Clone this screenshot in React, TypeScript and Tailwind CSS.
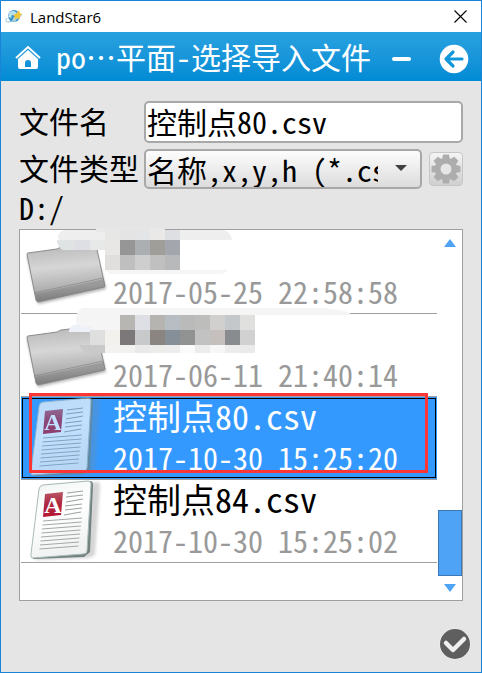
import { useId, useState } from 'react';

type Entry = { name: string; date: string; kind: 'folder' | 'doc' };

const entries: Entry[] = [
  { name: '', date: '2017-05-25 22:58:58', kind: 'folder' },
  { name: '', date: '2017-06-11 21:40:14', kind: 'folder' },
  { name: '控制点80.csv', date: '2017-10-30 15:25:20', kind: 'doc' },
  { name: '控制点84.csv', date: '2017-10-30 15:25:02', kind: 'doc' },
];

// Pixelated blocks that hide the two folder names: x, y, width, height, colour.
const blocks: [number, number, number, number, string][] = [
  [105, 229, 15, 11, '#e7e7e6'], [120, 229, 15, 11, '#e3e4e3'], [135, 229, 15, 11, '#e4e5e6'], [150, 229, 15, 11, '#ebe9e7'], [165, 230, 15, 10, '#dddfe2'],
  [105, 240, 15, 15, '#e8e7e5'], [120, 240, 15, 15, '#969696'], [135, 240, 15, 15, '#acafb2'], [150, 240, 15, 15, '#a09e99'], [165, 240, 15, 15, '#a3a7ad'],
  [105, 255, 15, 15, '#e0dfde'], [120, 255, 15, 15, '#bfbfbf'], [135, 255, 15, 15, '#cecece'], [150, 255, 15, 15, '#c0c0c0'], [165, 255, 15, 15, '#b7b9bb'],
  [105, 315, 15, 15, '#f5f5f5'], [120, 315, 15, 15, '#b8b6b2'], [135, 315, 15, 15, '#dddfe5'], [150, 315, 15, 15, '#b6b4b0'], [165, 315, 15, 15, '#b8bcc3'],
  [180, 315, 15, 15, '#bababa'], [195, 315, 15, 15, '#bdbdbb'], [210, 315, 15, 15, '#d2d0cf'], [225, 315, 15, 15, '#c4c8cb'], [240, 315, 15, 15, '#e0e0de'],
  [90, 330, 15, 15, '#dfdfdf'], [105, 330, 15, 15, '#f3f1ed'], [120, 330, 15, 15, '#7c787a'], [135, 330, 15, 15, '#c7c9cb'], [150, 330, 15, 15, '#8b8581'], [165, 330, 15, 15, '#868e98'],
  [180, 330, 15, 15, '#909391'], [195, 330, 15, 15, '#c2c2c2'], [210, 330, 15, 15, '#c5c0bd'], [225, 330, 15, 15, '#888c8f'], [240, 330, 15, 15, '#d1d1d1'],
  [105, 345, 15, 8, '#f3f2f1'], [120, 345, 15, 8, '#f2f2f0'], [135, 345, 15, 8, '#e9e9e9'], [150, 345, 15, 8, '#ececeb'], [165, 345, 15, 8, '#ededee'],
  [180, 345, 15, 8, '#fbfbfb'], [195, 345, 15, 8, '#ececec'], [210, 345, 15, 8, '#f7f7f7'], [225, 345, 15, 8, '#ececec'], [240, 345, 15, 8, '#eaeaea'],
];

function NameMosaic() {
  return (
    <svg className="pointer-events-none absolute -top-[5px] left-[30px]" width="310" height="130" viewBox="50 225 310 130" aria-hidden="true">
      <path d="M64 230h160c5 2 7 5 8 10H60c-4-2-2-8 4-10z" fill="#eeeeee" />
      <path d="M96 228h67v4h-67z" fill="#e8e8e8" />
      <path d="M57 240h18v10H63c-4-2-6-6-6-10z" fill="#e0e3e3" />
      <path d="M75 240h15v10H75z" fill="#dddfe5" />
      <path d="M90 240h15v10H90z" fill="#e7e8e8" />
      <path d="M105 270h123c-2 3-6 4-9 4H110z" fill="#f5f5f5" />
      <path d="M82 308h243l20 3 8 4H120v15H79c-5-8-4-17 3-22z" fill="#f5f5f5" />
      <path d="M69 330c2-6 8-8 14-2 4-3 8-3 12 2l-4 2H69z" fill="#eff1f8" />
      <path d="M79 345h26v8H87q-6-3-8-8z" fill="#c9c9c9" />
      {blocks.map(([x, y, w, h, fill]) => (
        <rect key={`${x}-${y}`} x={x} y={y} width={w} height={h} fill={fill} />
      ))}
    </svg>
  );
}

function FolderIcon() {
  const id = useId();
  return (
    <svg className="shrink-0 overflow-visible" width="90" height="80" viewBox="0 0 90 80" aria-hidden="true">
      <defs>
        <linearGradient id={id + 'f'} x1="0" y1="0" x2="0.12" y2="1">
          <stop offset="0" stopColor="#b4b4b4" />
          <stop offset="0.45" stopColor="#d6d6d6" />
          <stop offset="0.8" stopColor="#b0b0b0" />
          <stop offset="1" stopColor="#808080" />
        </linearGradient>
        <filter id={id + 's'} x="-20%" y="-20%" width="140%" height="140%">
          <feGaussianBlur stdDeviation="1.5" />
        </filter>
      </defs>
      <path d="M4 24 72 16 83 57 15 72z" fill="#777" opacity="0.6" filter={`url(#${id}s)`} />
      <path d="M4 22q0-1 1-1L34 17l4-2 33-4q2 0 2 2l9 41q0 1-1 1L15 70q-1 0-2-2z" fill={`url(#${id}f)`} stroke="#8c8c8c" strokeWidth="1" />
      <path d="M12 62 81 47 82 55 14 70z" fill="#777" opacity="0.4" />
      <path d="m11 61 69-15" stroke="#858585" strokeWidth="1" opacity="0.7" />
    </svg>
  );
}

function DocIcon({ dim }: { dim: boolean }) {
  const id = useId();
  const lower = [0, 1, 2, 3, 4, 5, 6, 7];
  return (
    <svg className={`shrink-0 overflow-visible ${dim ? 'opacity-70' : ''}`} width="90" height="80" viewBox="0 0 90 80" aria-hidden="true">
      <defs>
        <linearGradient id={id + 'p'} x1="0" y1="0" x2="0.3" y2="1">
          <stop offset="0" stopColor="#f1f4f4" />
          <stop offset="0.5" stopColor="#ffffff" />
          <stop offset="1" stopColor="#f0f2f2" />
        </linearGradient>
        <linearGradient id={id + 'r'} x1="0" y1="0" x2="0" y2="1">
          <stop offset="0" stopColor="#b95564" />
          <stop offset="0.5" stopColor="#ae2540" />
          <stop offset="1" stopColor="#b51732" />
        </linearGradient>
        <filter id={id + 's'} x="-20%" y="-20%" width="140%" height="140%">
          <feGaussianBlur stdDeviation="1.5" />
        </filter>
      </defs>
      <path d="M22 5 74 1Q77 1 77 5L72 74 66 77 12 79z" fill="#888" opacity="0.35" filter={`url(#${id}s)`} />
      <path d="M19 5 67 0Q70 0 70 4L67 71 61 76 10 78z" fill="#71827f" />
      <path d="M20 4 65 0Q68 0 68 3L64 70Q64 73 60 73L10 77Q7 77 8 73L16 8Q17 4 20 4z" fill={`url(#${id}p)`} stroke="#a9bab9" strokeWidth="1" />
      <path d="m22 13 18-2-2 23-18 2z" fill={`url(#${id}r)`} />
      <text x="30" y="32" textAnchor="middle" className="fill-white font-['Liberation_Serif',serif] text-[24px] font-bold">A</text>
      <path d="m44 12 16-2m-17 6 17-2m-17 7 17-3m-18 7 17-2m-17 6 17-2m-18 7 17-3" stroke="#9ba0a0" strokeWidth="1" />
      {lower.map((i) => (
        <path key={i} d={`m${20 - i / 2} ${40 + i * 4} 39-3`} stroke="#a3a8a8" strokeWidth="1" />
      ))}
    </svg>
  );
}

function Globe() {
  return (
    <svg width="18" height="16" viewBox="0 0 18 16" aria-hidden="true">
      <circle cx="9" cy="7" r="6" fill="#3d93c6" />
      <path d="M4 4c3-3 6-2 8 0l-2 2-3 0-1 3-3-1zM9 8l3 1-2 4-3-1z" fill="#b9e0ed" />
      <path d="M2 9c-2 3-1 4 1 4 5 0 12-4 14-8" fill="none" stroke="#8fc3df" strokeWidth="1" />
      <path d="m14 1 1 3 2 1-2 2v3l-3-1-3 2 1-3-2-2 3-1z" fill="#f3c63c" />
    </svg>
  );
}

export default function App() {
  const [selected, setSelected] = useState(2);
  const [file, setFile] = useState('控制点80.csv');

  return (
    <div lang="zh-CN" className="flex min-h-screen flex-col border border-[#1883d7] bg-[#e5e5e5] font-['Noto_Sans_CJK_SC',sans-serif] text-[30px] leading-[40px] text-black [font-feature-settings:'hwid']">
      <div className="flex h-[31px] items-center bg-white pr-[14px] pl-1">
        <Globe />
        <span className="ml-[7px] flex-1 font-['Open_Sans',sans-serif] text-[15px] leading-[20px] [font-feature-settings:normal]">LandStar6</span>
        <button type="button" aria-label="关闭" className="flex size-[13px] items-center justify-center">
          <svg width="13" height="13" viewBox="0 0 13 13" fill="none" stroke="#000" strokeWidth="1.1">
            <path d="m.5.5 12 12m0-12-12 12" />
          </svg>
        </button>
      </div>

      <header className="flex h-[49px] items-center bg-linear-to-b from-[#28a1df] to-[#008bd5] pt-1 pr-3 pl-[14px] text-white">
        <button type="button" aria-label="主页" className="shrink-0">
          <svg className="block" width="26" height="28" viewBox="0 0 26 28">
            <path d="M1 13 13 2l12 11" fill="none" stroke="#fff" strokeWidth="2" />
            <path d="M3 14 13 5l10 9v8a2 2 0 0 1-2 2h-5v-6q0-3-3-3t-3 3v6H5a2 2 0 0 1-2-2z" fill="#fff" />
            <path d="M9 23h8" stroke="#fff" strokeWidth="2" />
          </svg>
        </button>
        <h1 className="ml-[15px] flex-1 pb-1.5 whitespace-nowrap">po…平面-选择导入文件</h1>
        <button type="button" aria-label="最小化" className="mr-7 flex h-7 w-[19px] items-center">
          <span className="h-1 w-full rounded-full bg-white" />
        </button>
        <button type="button" aria-label="返回" className="shrink-0">
          <svg className="block" width="30" height="30" viewBox="0 0 30 30">
            <circle cx="15" cy="15" r="14.3" fill="#fff" />
            <path d="M23 15H8m6-7-7 7 7 7" fill="none" stroke="#1497da" strokeWidth="3.2" strokeLinecap="round" strokeLinejoin="round" />
          </svg>
        </button>
      </header>

      <main className="flex flex-1 flex-col px-[18px] pt-5">
        <div className="flex h-[42px] items-center">
          <label htmlFor="file-name" className="w-[125px] shrink-0 pb-1">文件名</label>
          <input
            id="file-name"
            value={file}
            onChange={(e) => setFile(e.target.value)}
            className="h-[42px] min-w-0 flex-1 rounded-[5px] border-2 border-[#a8a8a8] bg-white px-px pb-0.5 outline-none"
          />
        </div>
        <div className="mt-1.5 flex h-10 items-center">
          <label htmlFor="file-type" className="w-[125px] shrink-0 pb-1 whitespace-nowrap">文件类型</label>
          <div className="relative min-w-0 flex-1">
            <select
              id="file-type"
              className="block h-10 w-full appearance-none rounded-[5px] border-2 border-[#a8a8a8] bg-linear-to-b from-[#fdfdfd] to-[#dcdcdc] pr-[42px] pl-px leading-9 outline-none"
            >
              <option>名称,x,y,h (*.csv)</option>
            </select>
            <svg className="pointer-events-none absolute top-4 right-[15px]" width="12" height="7" viewBox="0 0 12 7" aria-hidden="true">
              <path d="M0 0h12L6 6z" fill="#404040" />
            </svg>
          </div>
          <button type="button" aria-label="设置" className="ml-[7px] flex size-[34px] shrink-0 items-center justify-center rounded-[4px] border border-[#c6c6c6] bg-linear-to-b from-[#f4f4f4] to-[#cfcfcf]">
            <svg width="30" height="30" viewBox="-15 -15 30 30">
              <g fill="#adadad">
                {[0, 45, 90, 135].map((a) => (
                  <path key={a} d="M-4-9-3-14.5h6L4-9V9L3 14.5h-6L-4 9z" transform={`rotate(${a})`} />
                ))}
                <circle r="11" />
              </g>
              <circle r="5.5" fill="#e6e6e6" />
            </svg>
          </button>
        </div>
        <p className="pb-1 leading-9">D:/</p>

        <div className="relative flex min-h-[372px] flex-1 border border-[#a0a0a0] bg-white pt-px pl-px">
          <div role="listbox" aria-label="文件" className="min-w-0 flex-1">
            {entries.map((entry, i) => {
              const on = i === selected;
              return (
                <button
                  key={i}
                  type="button"
                  role="option"
                  aria-selected={on}
                  onClick={() => setSelected(i)}
                  className={`block h-[83px] w-full border-b border-[#a0a0a0] p-px text-left ${on ? 'bg-[#3399ff] text-white' : 'text-black'}`}
                >
                  <span className={`flex h-full border ${on ? 'border-black' : 'border-transparent'}`}>
                    <span className="flex w-[90px] shrink-0 items-center">
                      {entry.kind === 'folder' ? <FolderIcon /> : <DocIcon dim={on} />}
                    </span>
                    <span className="flex flex-col whitespace-nowrap">
                      <span className="mb-1 h-[34px] text-[34px] leading-[34px]">{entry.name}</span>
                      <span className={on ? 'text-white' : 'text-[#999999]'}>{entry.date}</span>
                    </span>
                  </span>
                </button>
              );
            })}
          </div>
          <div className="ml-px flex w-6 shrink-0 flex-col">
            <button type="button" aria-label="向上滚动" className="flex h-6 items-center justify-center">
              <svg width="12" height="8" viewBox="0 0 12 8"><path d="m6 0 6 8H0z" fill="#4fa3f7" /></svg>
            </button>
            <div className="flex flex-1 flex-col justify-end">
              <div className="h-[66px] border border-[#3b78b5] bg-[#4fa3f7]" />
            </div>
            <button type="button" aria-label="向下滚动" className="flex h-6 items-center justify-center">
              <svg width="12" height="8" viewBox="0 0 12 8"><path d="m6 8 6-8H0z" fill="#4fa3f7" /></svg>
            </button>
          </div>
          <NameMosaic />
          <div className="pointer-events-none absolute top-[163px] right-[34px] left-[9px] h-20 border-3 border-[#fd3535]" />
        </div>
      </main>

      <footer className="flex h-[71px] items-center justify-end pt-[14px] pr-[10px]">
        <button type="button" aria-label="确定">
          <svg className="block" width="32" height="32" viewBox="0 0 32 32">
            <circle cx="16" cy="16" r="15.5" fill="#f2f2f2" />
            <circle cx="16" cy="16" r="15" fill="#5f5f5f" />
            <path d="m7 15 7 7L25 11" fill="none" stroke="#f0f0f0" strokeWidth="4.5" strokeLinecap="round" strokeLinejoin="round" />
          </svg>
        </button>
      </footer>
    </div>
  );
}
